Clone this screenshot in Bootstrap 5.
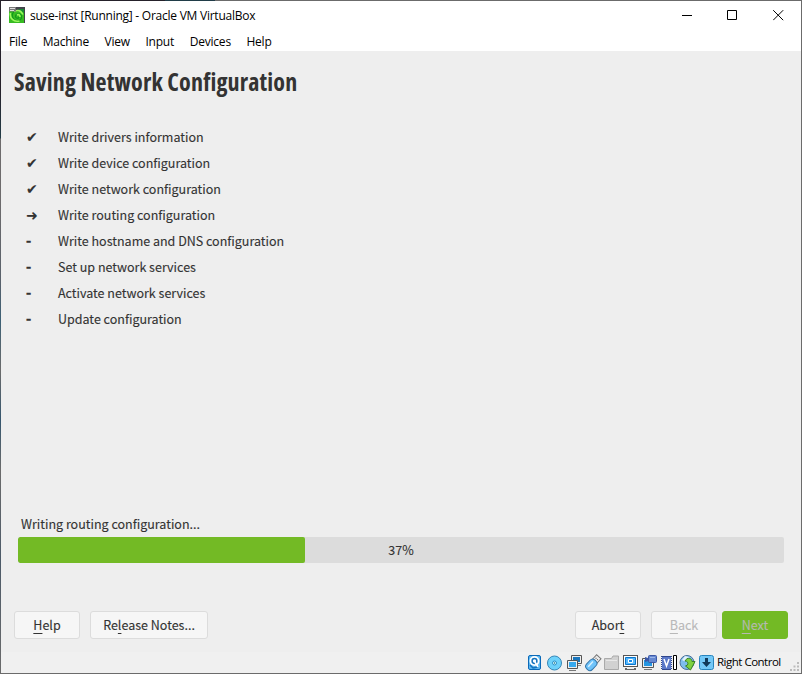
<!DOCTYPE html>
<html lang="en">
<head>
<meta charset="utf-8">
<title>suse-inst [Running] - Oracle VM VirtualBox</title>
<link rel="stylesheet" href="https://cdn.jsdelivr.net/npm/bootstrap@5.3.0/dist/css/bootstrap.min.css">
<style>
body{width:802px;height:674px;overflow:hidden;font-family:"Open Sans","Noto Sans",sans-serif;font-size:12px;line-height:16px;color:#000}
.vm-window{width:802px;height:674px;padding:1px;background:
  linear-gradient(90deg,#25212a 165px,#203c48 165px 215px,#6b6b6b 215px) 0 0/802px 1px no-repeat,
  linear-gradient(#25212a 90px,#233d48 138px,#6d6b6c 139px 200px,#59616b 280px,#3c6075 320px,#6b6b6b 370px,#35566e 420px,#6b6b6b 470px,#4c5a68 560px,#6b6b6b) 0 0/1px 674px no-repeat,#6b6b6b}
.title-bar{height:30px;background:#fff;padding-left:8px}
.app-icon{margin-bottom:2px}
.title-text{margin-left:5px;font-size:12px;letter-spacing:-.245px;white-space:pre}
.controls{padding-right:17px;gap:35px;height:30px;padding-top:9px}
.menu-bar{height:20px;background:#fff;padding-left:8px;letter-spacing:-.2px;gap:15.5px}
.menu-bar span{white-space:pre;line-height:22px}
.guest{height:601px;background:#eee;color:#333;font-family:"Noto Sans CJK SC",sans-serif;font-size:12.5px;line-height:26px;padding:1px 13px 0;-webkit-text-stroke:.12px currentColor}
.guest h1{font-family:"Open Sans",sans-serif;font-weight:700;font-stretch:75%;font-size:24px;letter-spacing:.15px;line-height:34px;margin:13px 0 0;-webkit-text-stroke:0}
.steps{margin-top:25px;height:388px;padding-left:11px}
.steps .sign{width:33px;padding-left:1px;font-family:"DejaVu Sans",sans-serif;font-size:14px}
.steps .dash{font-family:"Noto Sans CJK SC",sans-serif;font-weight:700;line-height:24px;-webkit-text-stroke:.4px #333}
.status-label{padding-left:7px;line-height:24px;height:25px}
.install-progress{height:26px;margin:0 4px;background:#dcdcdc;border-radius:2px}
.install-progress .progress-bar{background:#73ba25;border-radius:2px}
.percent{font-size:12.5px;color:#333}
.wiz{height:28px;line-height:24px;padding:0 0 1px;font-size:12.5px;border:1px solid #dcdcdc;border-radius:3px;background:#f6f6f6;color:#333;width:66px}
.wiz.notes{width:118px;margin-left:10px}
.wiz:disabled{opacity:1;background:#f6f6f6;border-color:#dcdcdc;color:#b9b9b9;margin-left:10px}
.wiz.next:disabled{background:#73ba25;border-color:#73ba25;color:#b5b9b0;margin-left:5px}
.wiz u{text-underline-offset:3px;text-decoration-thickness:1px;text-decoration-skip-ink:none}
.status-bar{height:21px;background:#f0f0f0;padding-left:526px}
.status-bar svg{flex:none}
.host-key{letter-spacing:-.5px;font-size:11.5px;margin-left:1px;padding-bottom:1px;white-space:pre}
</style>
</head>
<body>
<div class="vm-window d-flex flex-column">
  <header class="title-bar d-flex align-items-center">
    <svg class="app-icon" width="16" height="16" viewBox="0 0 16 16"><path d="M0 0h16v16H0z" fill="#41434a"/><path d="M0 3h15v13H0z" fill="#37bb22"/><path d="M9 2h6v4z" fill="#198a36"/><path d="M14.500 7C10 1 2 4 3.500 10c1.500 5 9 4.500 9 0 0-4-6-4-6-.5 0 2 3 2.500 3.500.5" fill="none" stroke="#129a1c" stroke-width="1.2"/><path d="M1.500 6c-1 5 3 9.500 9 8M5 4.500c4-2 7-1 9 3M8 8c2-1 3 0 3 2" fill="none" stroke="#9cf85e" stroke-width="1.6"/><path d="M0 0h7v4.500H0z" fill="#777"/><path d="M1 1.500h5M1 3.500h4" stroke="#ddd"/></svg>
    <span class="title-text">suse-inst [Running] - Oracle VM VirtualBox</span>
    <div class="controls d-flex align-items-start ms-auto">
      <svg width="11" height="11"><path d="M1 5.500h10" stroke="#000"/></svg>
      <svg width="11" height="11"><path d="M.5.5h9v9h-9z" fill="none" stroke="#000"/></svg>
      <svg width="11" height="11"><path d="M.2.200l10 10M10.200.200l-10 10" stroke="#000"/></svg>
    </div>
  </header>
  <nav class="menu-bar d-flex"><span>File</span><span>Machine</span><span>View</span><span>Input</span><span>Devices</span><span>Help</span></nav>
  <main class="guest">
    <h1>Saving Network Configuration</h1>
    <div class="steps">
      <div class="d-flex"><span class="sign">✔</span><span>Write drivers information</span></div>
      <div class="d-flex"><span class="sign">✔</span><span>Write device configuration</span></div>
      <div class="d-flex"><span class="sign">✔</span><span>Write network configuration</span></div>
      <div class="d-flex"><span class="sign">➜</span><span>Write routing configuration</span></div>
      <div class="d-flex"><span class="sign dash">-</span><span>Write hostname and DNS configuration</span></div>
      <div class="d-flex"><span class="sign dash">-</span><span>Set up network services</span></div>
      <div class="d-flex"><span class="sign dash">-</span><span>Activate network services</span></div>
      <div class="d-flex"><span class="sign dash">-</span><span>Update configuration</span></div>
    </div>
    <div class="status-label">Writing routing configuration...</div>
    <div class="progress install-progress position-relative">
      <div class="progress-bar" style="width:37.5%"></div>
      <span class="percent position-absolute top-0 start-50 translate-middle-x">37%</span>
    </div>
    <div class="d-flex mt-5">
      <button class="btn wiz"><u>H</u>elp</button>
      <button class="btn wiz notes">Re<u>l</u>ease Notes...</button>
      <button class="btn wiz ms-auto">Abor<u>t</u></button>
      <button class="btn wiz" disabled><u>B</u>ack</button>
      <button class="btn wiz next" disabled><u>N</u>ext</button>
    </div>
  </main>
  <footer class="status-bar d-flex align-items-center">
    <svg width="189" height="21" viewBox="0 0 189 21">
      <!-- hard disk -->
      <rect x="1.500" y="3.500" width="12" height="14" rx="1.500" fill="#5cb8f2" stroke="#0b69b8"/>
      <circle cx="7.500" cy="9" r="5" fill="#fff"/><circle cx="7.500" cy="9" r="2.400" fill="none" stroke="#1673bd" stroke-width="1.500"/><path d="M3 13l3 3 5-1" fill="none" stroke="#1673bd" stroke-width="1.500"/><path d="M8 10l3 5" stroke="#fff" stroke-width="1.500"/>
      <!-- optical disc -->
      <circle cx="27.500" cy="11" r="7" fill="#6ed2fb" stroke="#3687b8"/><circle cx="27.500" cy="11" r="2" fill="#d9f4ff" stroke="#2a91c9"/><circle cx="27.500" cy="11" r=".7" fill="#177"/>
      <!-- network screens -->
      <path d="M44.500 3.500h10v8h-10z" fill="#eee" stroke="#555"/><path d="M46 5h7v5h-7z" fill="#1976bd"/><path d="M48 13.500h6" stroke="#888"/>
      <path d="M40.500 8.500h10v8h-10z" fill="#eee" stroke="#555"/><path d="M42 10h7v5h-7z" fill="#36a9ef"/><path d="M42 18.500h7" stroke="#777"/>
      <!-- usb stick -->
      <g transform="translate(66 11) rotate(-47)"><rect x="2.500" y="-3" width="6" height="6" fill="#eee" stroke="#777"/><path d="M5 -1h1M5 1h1" stroke="#555"/><rect x="-8.500" y="-4" width="12" height="8" rx="3.500" fill="#6fc3fa" stroke="#3475a9"/><path d="M-6 -1h7" stroke="#d9f2ff" stroke-width="1.500"/></g>
      <!-- shared folder -->
      <path d="M77.500 17.500v-11h7l1.500-2.500h5.500v13.500z" fill="#d1d1d1" stroke="#aaa"/><path d="M79 8.500h11" stroke="#e8e8e8"/>
      <!-- display -->
      <rect x="96.500" y="3.500" width="14" height="11" fill="#fff" stroke="#555"/><path d="M98.500 5.500h10v7h-10z" fill="#55b6fa" stroke="#0875cd"/><path d="M101.500 7.500h4v3h-4z" fill="#1889e6" stroke="#fff"/><path d="M98 17h11" stroke="#666" stroke-width="2"/><path d="M100 16.500h7" stroke="#eee"/>
      <!-- recording -->
      <path d="M115.500 6.500h11v9h-11z" fill="#eee" stroke="#555"/><path d="M117 8h8v6h-8z" fill="#2496e2"/><path d="M117 17.500h8" stroke="#777"/><rect x="121.500" y="3.500" width="8" height="7" rx="1" fill="#6588d0" stroke="#3c58a6"/><path d="M118 5l3 1v3l-3 1z" fill="#3c58a6"/><path d="M123 5.500h5" stroke="#9cb4e8"/>
      <!-- virtualization features -->
      <rect x="135" y="4" width="9" height="14" fill="#5b78c8"/><path d="M134.500 4v14M144.500 4v14" stroke="#31478d" stroke-dasharray="1 1"/><path d="M135 4.500h9M135 17.500h9" stroke="#31478d"/><path d="M137 7l2.500 7L142 7" fill="none" stroke="#fff" stroke-width="1.500"/>
      <path d="M146.500 3.500h3v14h-3z" fill="#fff" stroke="#000"/>
      <!-- mouse integration -->
      <circle cx="160" cy="10.500" r="7" fill="#7dbdec" stroke="#4a6f96"/><path d="M155 8l3-4 4 1-2 3-3 1z" fill="#e2f1fb"/><path d="M160 6.500c4-.5 5 1 5 3h3l-4.500 8.500-5-4 2-1c1-2 0-4-2.500-4z" fill="#7ed03f" stroke="#3a8325"/>
      <!-- keyboard capture -->
      <rect x="172.500" y="3.500" width="14" height="14" rx="2" fill="#73c8f7" stroke="#2784bd"/><path d="M178 6h3v4h3l-4.500 5-4.500-5h3z" fill="#123b5b"/>
    </svg>
    <span class="host-key">Right Control</span>
    <svg class="ms-auto" width="11" height="21" viewBox="0 0 11 21"><path d="M7 10h2v2H7zM3.500 13.500h2v2h-2zM7 13.500h2v2H7zM0 17h2v2H0zM3.500 17h2v2h-2zM7 17h2v2H7z" fill="#bbb"/></svg>
  </footer>
</div>
<script src="https://cdn.jsdelivr.net/npm/bootstrap@5.3.0/dist/js/bootstrap.bundle.min.js"></script>
</body>
</html>
